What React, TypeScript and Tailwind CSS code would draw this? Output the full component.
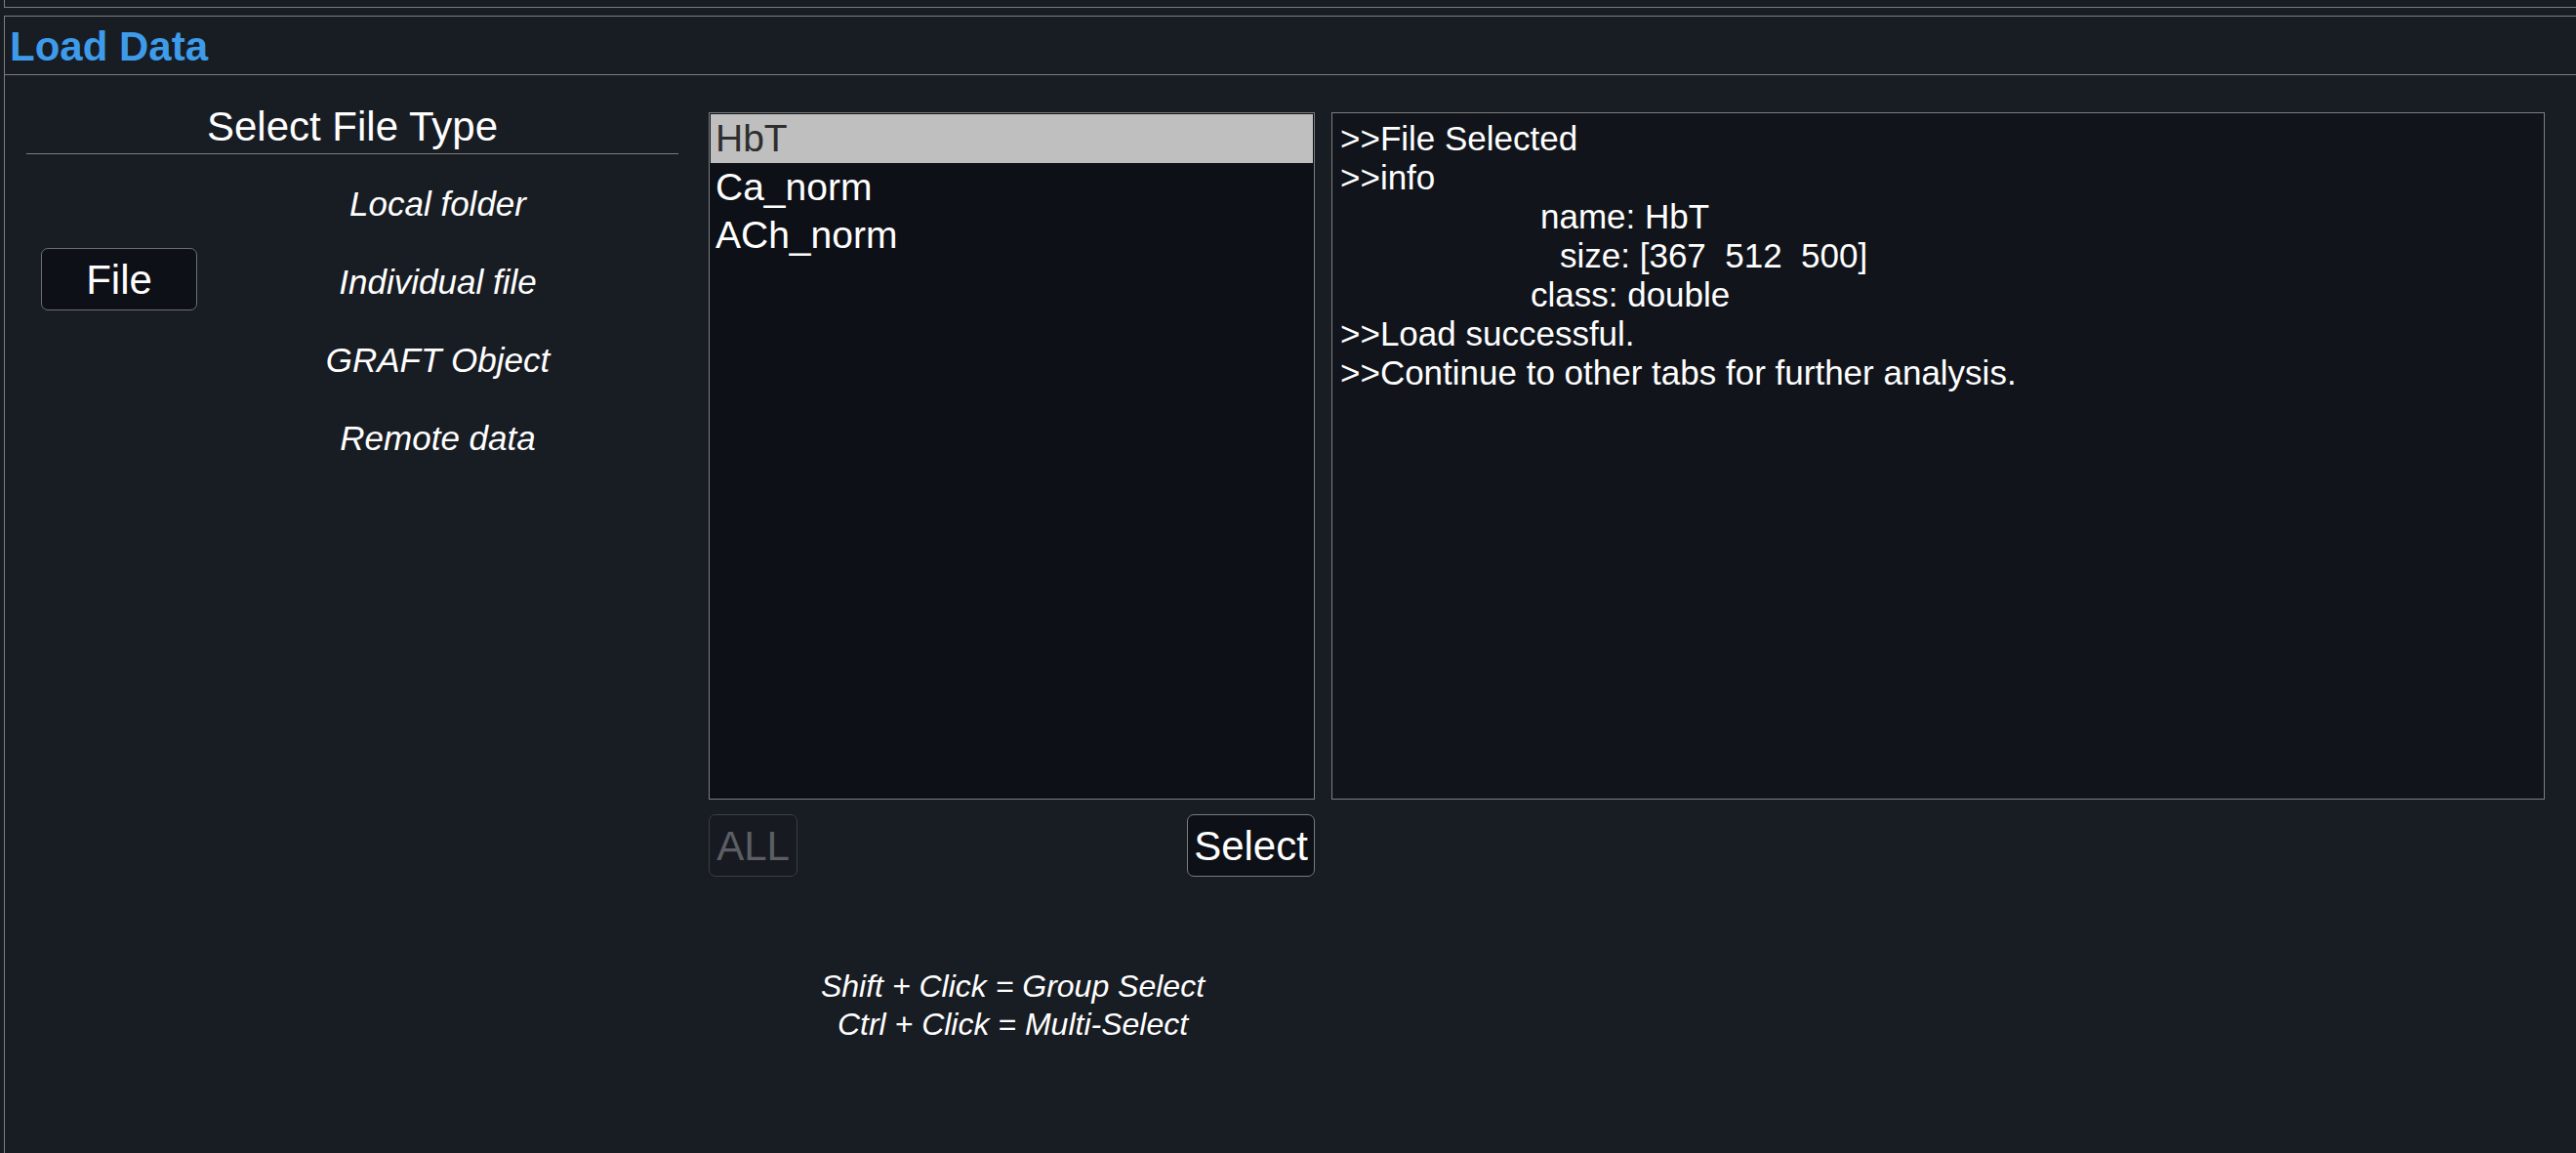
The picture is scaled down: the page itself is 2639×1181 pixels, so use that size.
import React from "react";

const font = { fontFamily: '"Liberation Sans", Arial, sans-serif' };

export default function App() {
  return (
    <div
      className="w-[2639px] h-[1181px] overflow-hidden bg-[#181c23] text-white flex flex-col"
      style={font}
    >
      {/* stub of panel above */}
      <div className="ml-[4px] h-[8px] border-l border-b border-[#7d7d7d] shrink-0" />
      {/* main panel */}
      <div className="mt-[8px] ml-[4px] flex-1 border-l border-t border-[#7d7d7d] flex flex-col min-h-0">
        <div className="h-[60px] shrink-0 border-b border-[#7d7d7d] flex items-center pl-[5px] pt-[2px]">
          <span className="text-[42px] font-bold text-[#3d9be9] leading-none">Load Data</span>
        </div>
        <div className="flex flex-row pl-[22px] pt-[27px]">
          {/* left column */}
          <div className="w-[668px] shrink-0 flex flex-col">
            <div className="h-[54px] border-b border-[#7d7d7d] text-center text-[42px] leading-[48px] pt-[2px]">
              Select File Type
            </div>
            <div className="flex flex-row mt-[9px]">
              <div className="w-[175px] shrink-0 pl-[15px]">
                <button className="mt-[87px] w-[160px] h-[64px] bg-[#0d1016] border border-[#6e6e6e] rounded-[7px] text-[42px] leading-none text-white pt-[2px]">
                  File
                </button>
              </div>
              <div className="flex-1 flex flex-col items-center italic text-[35px] pt-[2px]">
                <div className="h-[80px] flex items-center">Local folder</div>
                <div className="h-[80px] flex items-center">Individual file</div>
                <div className="h-[80px] flex items-center">GRAFT Object</div>
                <div className="h-[80px] flex items-center">Remote data</div>
              </div>
            </div>
          </div>
          {/* list column */}
          <div className="ml-[31px] w-[621px] shrink-0 flex flex-col mt-[11px]">
            <div className="h-[704px] border border-[#7d7d7d] bg-[#0d1016] p-[1px] flex flex-col">
              <div className="h-[50px] bg-[#bfbfbf] text-[#2e2e2e] text-[39px] leading-[50px] pl-[5px]">HbT</div>
              <div className="h-[50px] text-[39px] leading-[50px] pl-[5px]">Ca_norm</div>
              <div className="h-[50px] text-[39px] leading-[48px] pl-[5px]">ACh_norm</div>
            </div>
            <div className="mt-[15px] flex flex-row justify-between">
              <button className="w-[91px] h-[64px] border border-[#3a3e45] rounded-[7px] bg-[#171b21] text-[42px] leading-none text-[#5b5e64] pt-[2px]">
                ALL
              </button>
              <button className="w-[131px] h-[64px] border border-[#7a7a7a] rounded-[7px] bg-[#0d1016] text-[42px] leading-none text-white pt-[2px]">
                Select
              </button>
            </div>
            <div className="mt-[93px] text-center italic text-[32px] leading-[39px] pl-[2px]">
              <div>Shift + Click = Group Select</div>
              <div>Ctrl + Click = Multi-Select</div>
            </div>
          </div>
          {/* info column */}
          <div className="ml-[17px] w-[1243px] shrink-0 mt-[11px]">
            <div className="h-[704px] border border-[#7d7d7d] bg-[#11151b] pt-[6px] pl-[8px] text-[35px] leading-[40px] whitespace-pre">
              <div>{">>File Selected"}</div>
              <div>{">>info"}</div>
              <div className="pl-[205px]">name: HbT</div>
              <div className="pl-[225px]">{"size: [367  512  500]"}</div>
              <div className="pl-[195px]">class: double</div>
              <div>{">>Load successful."}</div>
              <div>{">>Continue to other tabs for further analysis."}</div>
            </div>
          </div>
        </div>
      </div>
    </div>
  );
}
